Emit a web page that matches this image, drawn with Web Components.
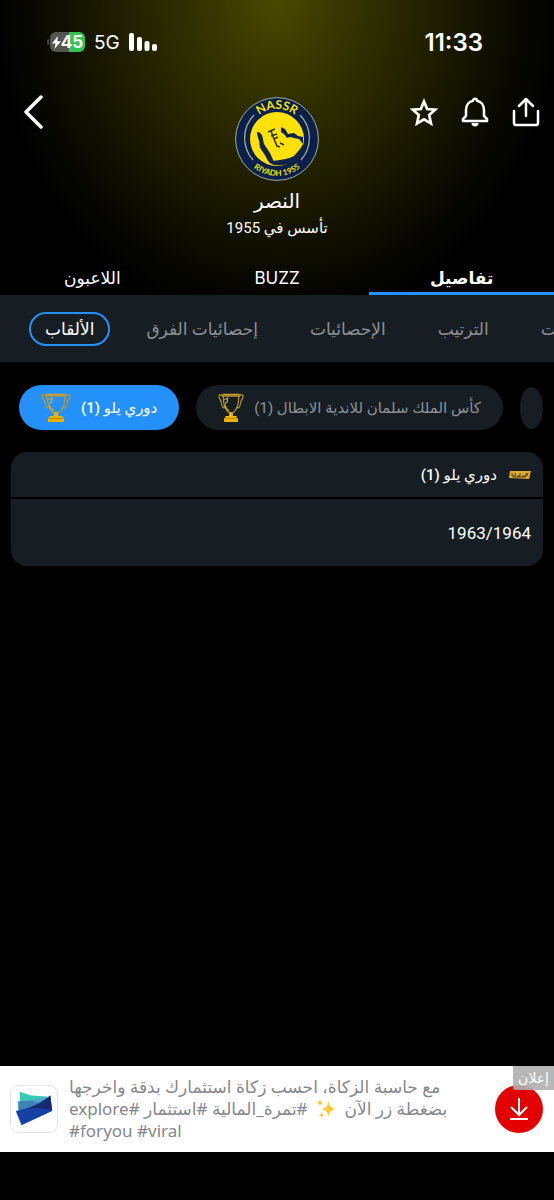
<!DOCTYPE html>
<html lang="ar" dir="rtl">
<head>
<meta charset="utf-8">
<meta name="viewport" content="width=device-width, initial-scale=1">
<title>النصر</title>
<style>
  html { background: #000; }
  body {
    margin: 0;
    min-height: 100vh;
    display: flex;
    flex-direction: column;
    background: #000;
    color: #fff;
    font-family: Roboto, "DejaVu Sans", sans-serif;
    --panel: #161e23;
    --accent: #2491fb;
    --muted: #8d9297;
  }
  .top {
    background: radial-gradient(ellipse 286px 330px at 50% 0, #4a4900 0%, #333200 28%, #1d1c00 58%, #080800 85%, #000 100%);
  }
  main { padding: 23px 11px; }
</style>
</head>
<body>
<div class="top">
  <status-bar></status-bar>
  <team-header>
    <team-crest slot="crest"></team-crest>
    <span slot="name">النصر</span>
    <span slot="founded">تأسس في 1955</span>
  </team-header>
  <nav-tabs>
    <nav-tab active>تفاصيل</nav-tab>
    <nav-tab>BUZZ</nav-tab>
    <nav-tab>اللاعبون</nav-tab>
  </nav-tabs>
</div>
<sub-tabs>
  <sub-tab>ات</sub-tab>
  <sub-tab>الترتيب</sub-tab>
  <sub-tab>الإحصائيات</sub-tab>
  <sub-tab>إحصائيات الفرق</sub-tab>
  <sub-tab active>الألقاب</sub-tab>
</sub-tabs>
<main>
  <chip-row>
    <trophy-chip stub></trophy-chip>
    <trophy-chip>كأس الملك سلمان للاندية الابطال (1)</trophy-chip>
    <trophy-chip active>دوري يلو (1)</trophy-chip>
  </chip-row>
  <title-card>
    <span slot="title">دوري يلو (1)</span>
    <span>1963/1964</span>
  </title-card>
</main>
<ad-banner>
  مع حاسبة الزكاة، احسب زكاة استثمارك بدقة واخرجها<br>
  بضغطة زر الآن <spark-icon></spark-icon> #تمرة_المالية #استثمار #explore<br>
  <bdi dir="ltr">#foryou #viral</bdi>
</ad-banner>

<script>
function define(name, html) {
  const template = document.createElement('template');
  template.innerHTML = html;
  customElements.define(name, class extends HTMLElement {
    constructor() {
      super();
      this.attachShadow({ mode: 'open' });
      this.shadowRoot.appendChild(template.content.cloneNode(true));
    }
  });
}

define('status-bar', `
<style>
  :host {
    display: flex;
    justify-content: space-between;
    align-items: center;
    height: 84px;
    padding: 0 71px 0 47px;
    font-family: Inter, sans-serif;
  }
  .time { font-size: 24px; font-weight: 600; }
  .left { display: flex; align-items: center; gap: 9px; direction: ltr; }
  .battery { display: flex; align-items: center; gap: 1px; }
  .nub { width: 2px; height: 6px; border-radius: 2px 0 0 2px; background: #444; }
  .level {
    display: flex;
    align-items: center;
    justify-content: center;
    width: 35px;
    height: 20px;
    border-radius: 6px;
    background: linear-gradient(to right, #555550 55%, #30c554 55%);
    font-size: 17px;
    font-weight: 700;
  }
  .net { font-size: 19px; }
</style>
<span class="time">11:33</span>
<div class="left">
  <div class="battery">
    <span class="nub"></span>
    <span class="level"><svg width="9" height="13" viewBox="0 0 9 13"><path d="M6 0 0 7.500h3.600L2.500 13 9 5.300H5.200z" fill="#fff"/></svg>45</span>
  </div>
  <span class="net">5G</span>
  <svg width="28" height="18" viewBox="0 0 28 18" fill="#fff">
    <rect width="5" height="18" rx="2"/><rect x="8" y="4" width="5" height="14" rx="2"/>
    <rect x="15.500" y="8" width="5" height="10" rx="2"/><rect x="23" y="11" width="5" height="7" rx="2"/>
  </svg>
</div>
`);

define('team-header', `
<style>
  :host {
    display: grid;
    grid-template-columns: 1fr auto 1fr;
    padding: 8px 11px 0;
  }
  .actions { display: flex; gap: 17px; }
  button {
    width: 34px;
    height: 40px;
    padding: 0;
    border: 0;
    background: none;
    color: #fff;
    display: grid;
    place-items: center;
  }
  .back { justify-self: end; width: 44px; }
  svg { fill: none; stroke: currentColor; }
  .team { display: flex; flex-direction: column; align-items: center; padding-top: 5px; }
  ::slotted([slot=name]) { font-size: 20px; line-height: 28px; margin-top: 6px; }
  ::slotted([slot=founded]) { font-size: 15px; line-height: 26px; }
</style>
<div class="actions">
  <button aria-label="مشاركة"><svg width="28" height="30" viewBox="0 0 28 30" stroke-width="2.500" stroke-linecap="round" stroke-linejoin="round"><path d="M2 14v12q0 2 2 2h20q2 0 2-2V14M14 19V3M7 9l7-7 7 7"/></svg></button>
  <button aria-label="تنبيهات"><svg width="28" height="30" viewBox="0 0 28 30" stroke-width="2.500" stroke-linejoin="round"><path d="M2 24v-2l3-3v-6c0-5 3-8.500 7-9.300a2 2 0 0 1 4 0c4 .8 7 4.300 7 9.300v6l3 3v2z"/><path d="M10.500 26a3.500 3.500 0 0 0 7 0z" fill="#fff" stroke="none"/></svg></button>
  <button aria-label="مفضلة"><svg width="28" height="28" viewBox="0 0 28 28" stroke-width="2.700"><path d="m14 3.500 3.200 7.500 8.100.7-6.100 5.400 1.800 8.400-7-4.200-7 4.200 1.800-8.400-6.100-5.400 8.100-.7z"/></svg></button>
</div>
<div class="team">
  <slot name="crest"></slot>
  <slot name="name"></slot>
  <slot name="founded"></slot>
</div>
<button class="back" aria-label="رجوع"><svg width="20" height="34" viewBox="0 0 20 34" stroke-width="3.500" stroke-linecap="round" stroke-linejoin="round"><path d="M18 2 3 17l15 15"/></svg></button>
`);

define('team-crest', `
<style>
  :host { display: block; width: 84px; height: 84px; }
  text { font: 700 12px Lato, sans-serif; fill: #f6e300; text-anchor: middle; direction: ltr; }
  .small { font-size: 8px; }
</style>
<svg width="84" height="84" viewBox="0 0 84 84">
  <circle cx="42" cy="42" r="41.400" fill="#0b1f4d" stroke="#9fb088" stroke-width="1"/>
  <circle cx="42" cy="42" r="27" fill="#ffe10a"/>
  <g fill="none" stroke="#a9b58a" stroke-width="1.200">
    <path d="M19 18a33 33 0 0 0-1 45"/>
    <path d="M65 18a33 33 0 0 1 1 45"/>
  </g>
  <path d="M22 35c3 0 5 2 5.500 5l1.500 7 6 9 4 9 2 3c-5 0-8-3-10-8-3-6-7-8-6.500-14C24 42 22 39 22 35z" fill="#10234b"/>
  <path d="M37 64c9-1 16-2 22-5l6-7 3-5c1 12-9 23-28 21z" fill="#10234b"/>
  <path d="m46 30 4 2 3 5 6-1 4 3 5 1v7l-4-5-5-1-4-1-3 1-3-4-3-2z" fill="#10234b"/>
  <path d="m33 35 7-3m-4 2 3 8m-3-3 6-2m-3 5 4-2m-4 2 3 7 3 1m0-4 4 2" fill="none" stroke="#30351e" stroke-width="1.600"/>
  <path id="arc-top" d="M12 42a30 30 0 0 1 60 0" fill="none"/>
  <path id="arc-bottom" d="M5 42a37 37 0 0 0 74 0" fill="none"/>
  <text><textPath href="#arc-top" startOffset="50%">NASSR</textPath></text>
  <text class="small"><textPath href="#arc-bottom" startOffset="50%">RIYADH 1955</textPath></text>
</svg>
`);

define('nav-tabs', `
<style>
  :host { display: grid; grid-template-columns: repeat(3, 1fr); margin-top: 19px; }
</style>
<slot></slot>
`);

define('nav-tab', `
<style>
  :host { display: block; }
  button {
    width: 100%;
    height: 35px;
    padding: 3px 0 0;
    border: 0;
    border-bottom: 3px solid transparent;
    background: none;
    color: #fff;
    font: 17px/28px Inter, "DejaVu Sans", sans-serif;
  }
  :host([active]) button { border-color: var(--accent); font-weight: 700; }
</style>
<button><slot></slot></button>
`);

define('sub-tabs', `
<style>
  :host {
    display: flex;
    justify-content: flex-end;
    align-items: center;
    gap: 20px;
    height: 67px;
    padding-left: 29px;
    overflow: hidden;
    background: var(--panel);
  }
</style>
<slot></slot>
`);

define('sub-tab', `
<style>
  :host { display: block; flex: none; }
  button {
    height: 34px;
    padding: 0 14px;
    border: 2px solid transparent;
    border-radius: 17px;
    background: none;
    color: var(--muted);
    font: 17px/28px Roboto, "DejaVu Sans", sans-serif;
    white-space: nowrap;
  }
  :host([active]) button { border-color: var(--accent); color: #fff; }
</style>
<button><slot></slot></button>
`);

define('chip-row', `
<style>
  :host { display: flex; align-items: center; gap: 17px; overflow: hidden; }
</style>
<slot></slot>
`);

define('trophy-chip', `
<style>
  :host { display: block; flex: none; }
  button {
    display: flex;
    align-items: center;
    gap: 10px;
    height: 45px;
    padding: 0 22px;
    border: 0;
    border-radius: 23px;
    background: var(--panel);
    color: var(--muted);
    font: 15px/28px Roboto, "DejaVu Sans", sans-serif;
    white-space: nowrap;
  }
  svg { width: 26px; height: 30px; }
  :host([active]) button { background: var(--accent); color: #fff; font-weight: 500; }
  :host([active]) svg { width: 30px; }
  :host([stub]) button { width: 23px; height: 42px; padding: 0; border-radius: 50%; }
  :host([stub]) svg { display: none; }
</style>
<button>
  <slot></slot>
  <svg viewBox="0 0 30 30" preserveAspectRatio="none" fill="none" stroke="#b9962f" stroke-width="1.300">
    <path d="M6 3h18c0 8-2 14-7 17h-4C8 17 6 11 6 3z"/>
    <path d="M6 4C3 0 0 2 1.500 5c1.500 2 2.500 4 3 7s2.500 3 4 2.500M24 4c3-4 6-2 4.500 1-1.500 2-2.500 4-3 7s-2.500 3-4 2.500"/>
    <path d="M5 1.500h20M7 7l4-2v3l-3 3M8 12c1 3 3 5 5 6" stroke="#d1a52b"/>
    <path d="M13.500 19h3l1 4h4v2h1.500v4H7v-4h1.500v-2h4z" fill="#efb400" stroke="none"/>
    <path d="M8.500 25.500h13" stroke="#b98300" stroke-width="1"/>
  </svg>
</button>
`);

define('title-card', `
<style>
  :host { display: block; margin-top: 22px; border-radius: 16px; overflow: hidden; }
  header, .body { display: flex; align-items: center; background: var(--panel); padding: 0 12px; }
  header { height: 45px; gap: 12px; font-size: 15px; font-weight: 500; }
  .body { height: 67px; margin-top: 2px; font-size: 17px; }
</style>
<header>
  <svg width="22" height="10" viewBox="0 0 22 10"><path d="M1 1h21l-2 8-20-1z" fill="#e0ad31"/><path d="M3 3v3h3V3m2 3h3V3m2 3h4V3m2 0-1 3M4 7h13" fill="none" stroke="#4c3b14"/></svg>
  <slot name="title"></slot>
</header>
<div class="body"><slot></slot></div>
`);

define('spark-icon', `
<style>
  :host { display: inline-block; vertical-align: -4px; margin: 0 4px; }
  svg { display: block; }
</style>
<svg width="20" height="20" viewBox="0 0 20 20" fill="#fdc93b">
  <path d="M12.500 2c1 5 2 6.500 7 8-5 1.500-6 3-7 8-1-5-2-6.500-7-8 5-1.500 6-3 7-8zM4 0c.4 2.500 1 3 3.500 3.800C5 4.500 4.400 5 4 7.500 3.600 5 3 4.500.5 3.800 3 3 3.600 2.500 4 0zM5.500 13c.4 2.200 1 2.700 3 3.300-2 .6-2.600 1-3 3.300-.4-2.300-1-2.700-3-3.300 2-.6 2.600-1.100 3-3.300z"/>
</svg>
`);

define('ad-banner', `
<style>
  :host { display: block; position: relative; margin-top: auto; padding-bottom: 48px; }
  .ad {
    display: flex;
    align-items: center;
    gap: 11px;
    height: 86px;
    padding: 0 11px 0 10px;
    background: #fff;
  }
  .badge {
    position: absolute;
    top: 0;
    right: 0;
    padding: 0 5px;
    background: #b0b0b0;
    border-bottom-left-radius: 3px;
    color: #fff;
    font-size: 14px;
    line-height: 24px;
    opacity: .9;
  }
  button {
    width: 48px;
    height: 48px;
    flex: none;
    padding: 0;
    border: 0;
    border-radius: 50%;
    background: #e30000;
    display: grid;
    place-items: center;
  }
  p {
    flex: 1;
    margin: 0;
    color: #85878c;
    font: 17px/22px "Noto Sans", "DejaVu Sans", sans-serif;
    text-align: left;
    white-space: nowrap;
  }
  .app { flex: none; border: 1px solid #e4e4e8; border-radius: 9px; box-sizing: border-box; }
</style>
<div class="ad">
  <button aria-label="تنزيل"><svg width="20" height="24" viewBox="0 0 20 24" fill="none" stroke="#fff" stroke-width="2"><path d="M10 1v17M2 10l8 8 8-8M1 22h18"/></svg></button>
  <p><slot></slot></p>
  <svg class="app" width="48" height="48" viewBox="0 0 48 48">
    <path d="m9 6 12 4 17 1-28 12z" fill="#36c9b5"/>
    <path d="M7 16c10 0 20-2 31-5l-4 12-26 8z" fill="#55a3c8"/>
    <path d="m9 16 11-.5L32 18 8 26z" fill="#3b83b5"/>
    <path d="M5 26c13-2 25-7 36-16l2 16-32 15z" fill="#1641a4"/>
    <path d="M8 26c13-3 24-8 33-16l2 16c-11-4-22-4-35 0z" fill="#172a70"/>
  </svg>
</div>
<span class="badge">إعلان</span>
`);
</script>
</body>
</html>
